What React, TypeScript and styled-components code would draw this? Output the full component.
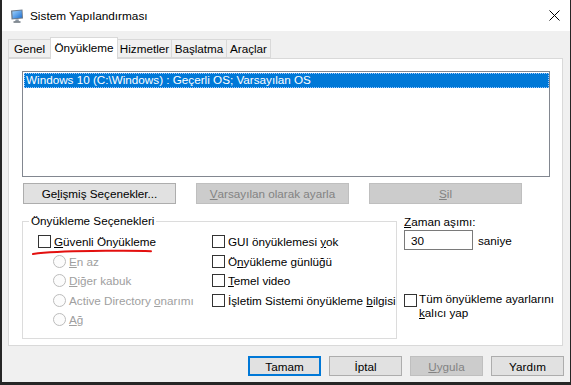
import React from 'react';
import styled, { createGlobalStyle } from 'styled-components';

const GlobalStyle = createGlobalStyle`
    html, body {
        margin: 0;
        padding: 0;
        background: #1f1f1f;
    }
    body {
        font-family: "Liberation Sans", "Noto Sans", sans-serif;
        font-size: 11.7px;
        color: #000;
    }
    * { box-sizing: border-box; }
`

const Window = styled.div`
    width: 571px;
    height: 385px;
    display: flex;
    flex-direction: column;
    background: #f0f0f0;
    border-left: 2px solid #262626;
    border-right: 1px solid #262626;
    border-bottom: 3px solid #262626;
`
const TitleBar = styled.div`
    height: 31px;
    flex: none;
    background: #fff;
    display: flex;
    align-items: center;
    padding-left: 8px;
`
const TitleText = styled.span`
    margin-left: 6px;
    font-size: 11.8px;
`
const CloseBtn = styled.div`
    margin-left: auto;
    width: 32px;
    height: 31px;
    display: flex;
    align-items: center;
    justify-content: center;
`
const Body = styled.div`
    flex: 1;
    display: flex;
    flex-direction: column;
    padding: 6px 7px 0 6px;
`
const TabStrip = styled.div`
    display: flex;
    align-items: flex-end;
    height: 21px;
    position: relative;
    z-index: 1;
`
const Tab = styled.div<{ $active?: boolean; $w: number }>`
    width: ${p => p.$w}px;
    height: ${p => (p.$active ? 22 : 19)}px;
    margin-bottom: ${p => (p.$active ? -1 : 0)}px;
    background: ${p => (p.$active ? '#fff' : '#f0f0f0')};
    border: 1px solid #d9d9d9;
    border-bottom: ${p => (p.$active ? 'none' : '1px solid #d9d9d9')};
    display: flex;
    align-items: center;
    justify-content: center;
    padding-bottom: ${p => (p.$active ? 3 : 0)}px;
    & + & { margin-left: -1px; }
`
const Panel = styled.div`
    height: 288px;
    background: #fff;
    border: 1px solid #d9d9d9;
    padding: 12px 12px 0 13px;
`
const ListBox = styled.div`
    height: 106px;
    border: 1px solid #828790;
    background: #fff;
    padding: 1px 0 0 1px;
`
const ListItem = styled.div`
    height: 15px;
    line-height: 14px;
    background: #0078d7;
    color: #fff;
    padding-left: 2px;
    outline: 1px dotted #9fcaff;
    outline-offset: -1px;
`
const ButtonRow = styled.div`
    display: flex;
    gap: 20px;
    margin-top: 6px;
    padding-left: 1px;
`
const Btn = styled.div<{ $disabled?: boolean; $w: number; $h: number; $default?: boolean }>`
    width: ${p => p.$w}px;
    height: ${p => p.$h}px;
    flex: none;
    display: flex;
    align-items: center;
    justify-content: center;
    background: ${p => (p.$disabled ? '#cccccc' : '#e1e1e1')};
    border: ${p => (p.$default ? '2px solid #0078d7' : p.$disabled ? '1px solid #bfbfbf' : '1px solid #adadad')};
    color: ${p => (p.$disabled ? '#838383' : '#000')};
`
const Lower = styled.div`
    display: flex;
    margin-top: 10px;
`
const Group = styled.fieldset`
    flex: none;
    width: 375px;
    height: 125px;
    margin: 0;
    padding: 4px 0 0 15px;
    border: 1px solid #dcdcdc;
    min-width: 0;
`
const Legend = styled.legend`
    padding: 0 2px;
    margin-left: -9px;
    line-height: 14px;
`
const OptionGrid = styled.div`
    display: grid;
    grid-template-columns: 174px 1fr;
`
const Column = styled.div`
    display: flex;
    flex-direction: column;
`
const Row = styled.div<{ $indent?: number }>`
    position: relative;
    height: 19.5px;
    display: flex;
    align-items: center;
    padding-left: ${p => p.$indent || 0}px;
    white-space: nowrap;
`
const CheckBox = styled.span`
    width: 13px;
    height: 13px;
    flex: none;
    border: 1px solid #333;
    background: #fff;
    margin-right: 3px;
`
const Radio = styled.span`
    width: 13px;
    height: 13px;
    flex: none;
    border: 1px solid #bcbcbc;
    border-radius: 50%;
    background: #fcfcfc;
    margin-right: 3px;
`
const Label = styled.span<{ $disabled?: boolean }>`
    color: ${p => (p.$disabled ? '#a0a0a0' : '#000')};
`
const Key = styled.span`
    text-decoration: underline;
`
const Mark = styled.svg`
    position: absolute;
    left: -6px;
    top: 16px;
`
const Side = styled.div`
    flex: 1;
    display: flex;
    flex-direction: column;
    margin-left: 7px;
`
const SideLabel = styled.div`
    line-height: 15px;
`
const TimeoutRow = styled.div`
    display: flex;
    align-items: center;
    margin-top: 1px;
`
const Input = styled.div`
    width: 69px;
    height: 20px;
    border: 1px solid #7a7a7a;
    background: #fff;
    padding-left: 6px;
    display: flex;
    align-items: center;
    margin-right: 5px;
`
const PersistRow = styled.div`
    display: flex;
    align-items: flex-start;
    margin-top: 44px;
    line-height: 14px;
    white-space: nowrap;
    & > span:first-child { margin-right: 2px; }
    & > span:last-child { margin-top: -2px; }
`
const Footer = styled.div`
    display: flex;
    justify-content: flex-end;
    gap: 8px;
    padding-top: 10px;
    margin-right: -1px;
`

const MonitorIcon = () => (
    <svg width="14" height="14" viewBox="0 0 14 14">
        <defs>
            <linearGradient id="scr" x1="0" y1="0" x2="1" y2="1">
                <stop offset="0" stopColor="#9fd3ff" />
                <stop offset="1" stopColor="#1c6fd1" />
            </linearGradient>
        </defs>
        <path d="M1 1.5 L12.5 0.5 L13 9.5 L1.5 10.5 Z" fill="#6d7a8a" />
        <path d="M2.3 2.4 L11.6 1.6 L12 8.6 L2.7 9.4 Z" fill="url(#scr)" />
        <path d="M5.5 10.5 L8.5 10.2 L9 12.2 L5.2 12.5 Z" fill="#8b96a3" />
        <rect x="3.5" y="12.3" width="7" height="1.4" fill="#5e6873" />
    </svg>
)

const CloseIcon = () => (
    <svg width="11" height="11" viewBox="0 0 11 11">
        <path d="M0.5 0.5 L10.5 10.5 M10.5 0.5 L0.5 10.5" stroke="#000" strokeWidth="1" fill="none" />
    </svg>
)

const tabs = [
    { name: 'Genel', w: 43 },
    { name: 'Önyükleme', w: 68, active: true },
    { name: 'Hizmetler', w: 55 },
    { name: 'Başlatma', w: 56 },
    { name: 'Araçlar', w: 45 },
]

const App = () => {
    return (
        <>
            <GlobalStyle />
            <Window>
                <TitleBar>
                    <MonitorIcon />
                    <TitleText>Sistem Yapılandırması</TitleText>
                    <CloseBtn><CloseIcon /></CloseBtn>
                </TitleBar>
                <Body>
                    <TabStrip>
                        {tabs.map(t => (
                            <Tab key={t.name} $w={t.w} $active={t.active}>{t.name}</Tab>
                        ))}
                    </TabStrip>
                    <Panel>
                        <ListBox>
                            <ListItem>Windows 10 (C:\Windows) : Geçerli OS; Varsayılan OS</ListItem>
                        </ListBox>
                        <ButtonRow>
                            <Btn $w={153} $h={21}>Ge<Key>l</Key>işmiş Seçenekler...</Btn>
                            <Btn $w={153} $h={21} $disabled><Key>V</Key>arsayılan olarak ayarla</Btn>
                            <Btn $w={153} $h={21} $disabled><Key>S</Key>il</Btn>
                        </ButtonRow>
                        <Lower>
                            <Group>
                                <Legend>Önyükleme Seçenekleri</Legend>
                                <OptionGrid>
                                    <Column>
                                        <Row>
                                            <CheckBox />
                                            <Label><Key>G</Key>üvenli Önyükleme</Label>
                                            <Mark width="122" height="8" viewBox="0 0 122 8">
                                                <path d="M1 6 C 15 4, 35 3.2, 60 3 S 100 2.4, 119 3.2" stroke="#e3100f" strokeWidth="2" fill="none" strokeLinecap="round" />
                                            </Mark>
                                        </Row>
                                        <Row $indent={15}><Radio /><Label $disabled><Key>E</Key>n az</Label></Row>
                                        <Row $indent={15}><Radio /><Label $disabled><Key>D</Key>iğer kabuk</Label></Row>
                                        <Row $indent={15}><Radio /><Label $disabled>Active Directory <Key>o</Key>narımı</Label></Row>
                                        <Row $indent={15}><Radio /><Label $disabled><Key>A</Key>ğ</Label></Row>
                                    </Column>
                                    <Column>
                                        <Row><CheckBox /><Label>GUI önyüklemesi <Key>y</Key>ok</Label></Row>
                                        <Row><CheckBox /><Label>Ö<Key>n</Key>yükleme günlüğü</Label></Row>
                                        <Row><CheckBox /><Label><Key>T</Key>emel video</Label></Row>
                                        <Row><CheckBox /><Label>İşletim Sistemi önyükleme <Key>b</Key>ilgisi</Label></Row>
                                    </Column>
                                </OptionGrid>
                            </Group>
                            <Side>
                                <SideLabel><Key>Z</Key>aman aşımı:</SideLabel>
                                <TimeoutRow>
                                    <Input>30</Input>
                                    <span>saniye</span>
                                </TimeoutRow>
                                <PersistRow>
                                    <CheckBox />
                                    <span>Tüm önyükleme ayarlarını<br /><Key>k</Key>alıcı yap</span>
                                </PersistRow>
                            </Side>
                        </Lower>
                    </Panel>
                    <Footer>
                        <Btn $w={73} $h={20} $default>Tamam</Btn>
                        <Btn $w={73} $h={20}>İptal</Btn>
                        <Btn $w={73} $h={20} $disabled><Key>U</Key>ygula</Btn>
                        <Btn $w={73} $h={20}>Yardım</Btn>
                    </Footer>
                </Body>
            </Window>
        </>
    )
}

export default App
